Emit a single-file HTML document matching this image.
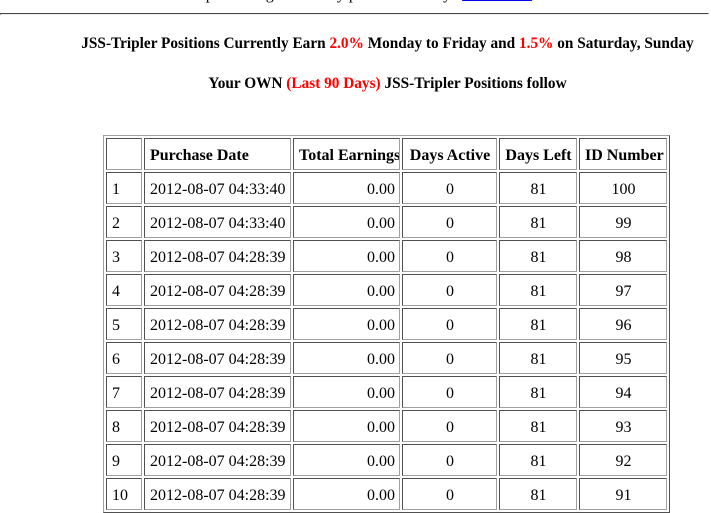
<!DOCTYPE html>
<html><head><style>
body{margin:0;background:#fff;font-family:"Liberation Serif",serif;font-size:16px;color:#000;width:711px;height:487px;overflow:hidden;position:relative}
.top{position:absolute;top:-14px;left:32px;width:711px;text-align:center}
.top a{color:#00e;text-decoration:underline}
hr{position:absolute;top:13px;left:0;width:707px;margin:0;border:1px inset #eee;border-top-color:#9a9a9a;border-left-color:#9a9a9a;height:0}
.h{position:absolute;left:32px;width:711px;text-align:center;font-weight:bold;font-size:15.3px;white-space:nowrap}
.r{color:#f00}
table{position:absolute;left:103px;top:135px;border-collapse:separate;border-spacing:2px;table-layout:fixed;border:1px solid;border-color:#a0a0a0 #505050 #505050 #a0a0a0;width:567px}
td,th{border:1px solid;border-color:#505050 #a0a0a0 #a0a0a0 #505050;height:32px;box-sizing:border-box;padding:3px 4px 0 5px;font-size:16px;white-space:nowrap;overflow:hidden}
th{text-align:left;font-weight:bold}
th.c{text-align:center}
td.c{text-align:center}td.rt{text-align:right;padding-right:4px}
</style></head><body>
<div class="top">Need help knowing how many positions to buy? <a>Click Here</a> for assistance.</div>
<hr>
<div class="h" style="top:35px">JSS-Tripler Positions Currently Earn <span class="r">2.0%</span> Monday to Friday and <span class="r">1.5%</span> on Saturday, Sunday</div>
<div class="h" style="top:75px">Your OWN <span class="r">(Last 90 Days)</span> JSS-Tripler Positions follow</div>
<table>
<colgroup><col style="width:36px"><col style="width:147px"><col style="width:107px"><col style="width:95px"><col style="width:78px"><col></colgroup>
<tr><th></th><th>Purchase Date</th><th class="c">Total Earnings</th><th class="c">Days Active</th><th class="c">Days Left</th><th class="c">ID Number</th></tr>
<tr><td>1</td><td>2012-08-07 04:33:40</td><td class="rt">0.00</td><td class="c">0</td><td class="c">81</td><td class="c">100</td></tr>
<tr><td>2</td><td>2012-08-07 04:33:40</td><td class="rt">0.00</td><td class="c">0</td><td class="c">81</td><td class="c">99</td></tr>
<tr><td>3</td><td>2012-08-07 04:28:39</td><td class="rt">0.00</td><td class="c">0</td><td class="c">81</td><td class="c">98</td></tr>
<tr><td>4</td><td>2012-08-07 04:28:39</td><td class="rt">0.00</td><td class="c">0</td><td class="c">81</td><td class="c">97</td></tr>
<tr><td>5</td><td>2012-08-07 04:28:39</td><td class="rt">0.00</td><td class="c">0</td><td class="c">81</td><td class="c">96</td></tr>
<tr><td>6</td><td>2012-08-07 04:28:39</td><td class="rt">0.00</td><td class="c">0</td><td class="c">81</td><td class="c">95</td></tr>
<tr><td>7</td><td>2012-08-07 04:28:39</td><td class="rt">0.00</td><td class="c">0</td><td class="c">81</td><td class="c">94</td></tr>
<tr><td>8</td><td>2012-08-07 04:28:39</td><td class="rt">0.00</td><td class="c">0</td><td class="c">81</td><td class="c">93</td></tr>
<tr><td>9</td><td>2012-08-07 04:28:39</td><td class="rt">0.00</td><td class="c">0</td><td class="c">81</td><td class="c">92</td></tr>
<tr><td>10</td><td>2012-08-07 04:28:39</td><td class="rt">0.00</td><td class="c">0</td><td class="c">81</td><td class="c">91</td></tr>
</table>
</body></html>
